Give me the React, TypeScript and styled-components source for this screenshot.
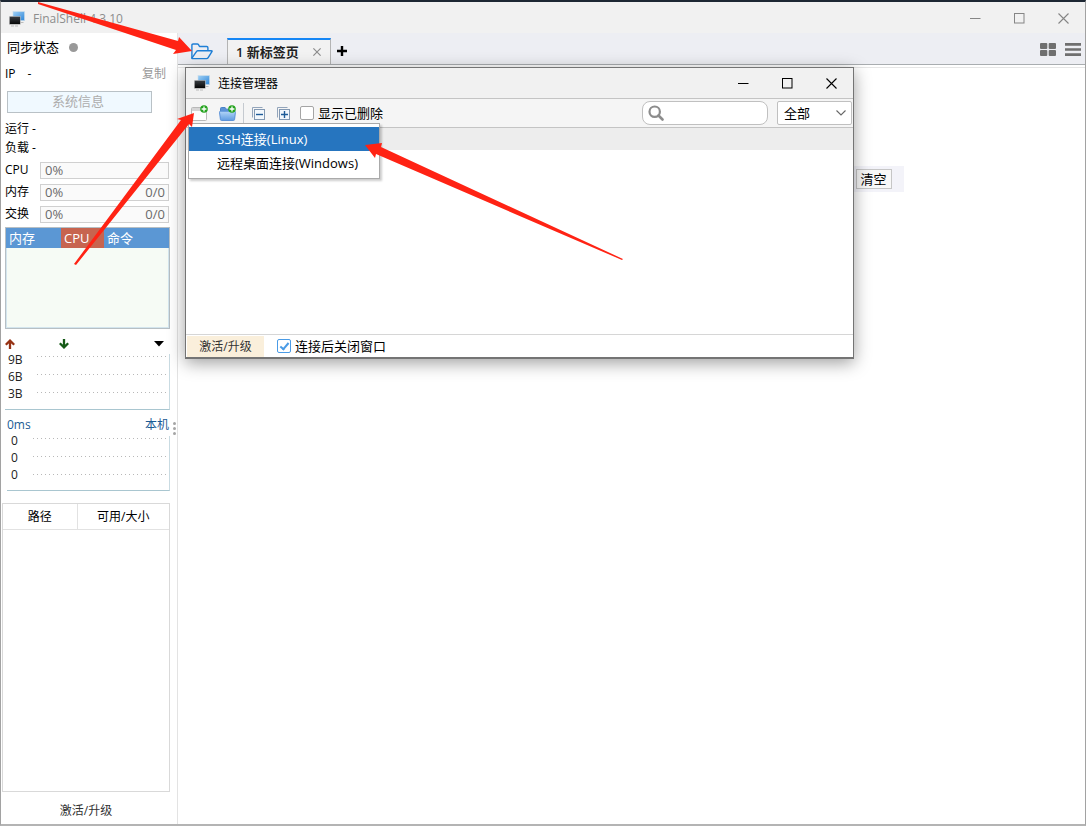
import React from 'react';
import styled, { createGlobalStyle } from 'styled-components';

const GlobalStyle = createGlobalStyle`
  *, *::before, *::after { box-sizing: border-box; }
  body {
    margin: 0;
    background: #fff;
    color: #000;
    font: 13px/18px "Open Sans", "Noto Sans CJK SC", sans-serif;
  }
  button, input, select { font: inherit; color: inherit; margin: 0; }
  button { padding: 0; border: 0; background: none; }
  svg { display: block; flex: none; }
`;

/* ---------- window ---------- */

const Window = styled.div`
  position: relative;
  display: flex;
  flex-direction: column;
  min-height: 100vh;
  overflow: hidden;
  border: 1px solid #a2a2a2;
  border-top: 2px solid #1d2733;
  border-bottom: 2px solid #b4b4b4;
`;

const TitleBar = styled.header`
  display: flex;
  align-items: center;
  height: 31px;
  padding: 2px 0 0 8px;
  background: #f1f1f1;
`;

const AppTitle = styled.h1`
  flex: 1;
  margin: 0 0 0 8px;
  font-size: 12px;
  font-weight: 400;
  color: #8d8d8d;
`;

const WindowButton = styled.button<{ $color: string }>`
  display: grid;
  place-items: center;
  width: 44px;
  height: 28px;
  color: ${(p) => p.$color};
`;

const Body = styled.div`
  flex: 1;
  display: flex;
`;

/* ---------- sidebar ---------- */

const Sidebar = styled.aside`
  position: relative;
  display: flex;
  flex-direction: column;
  flex: none;
  width: 177px;
  border-right: 1px solid #e3e3e3;
`;

const SyncRow = styled.div`
  display: flex;
  align-items: center;
  gap: 10px;
  height: 28px;
  padding-left: 6px;
`;

const SyncDot = styled.i`
  width: 9px;
  height: 9px;
  border-radius: 50%;
  background: #999;
`;

const IpRow = styled.div`
  display: flex;
  align-items: center;
  height: 26px;
  padding: 0 11px 0 4px;
  font-size: 12px;
  gap: 12px;
`;

const CopyButton = styled.button`
  margin-left: auto;
  color: #999;
`;

const InfoButton = styled.button`
  width: 145px;
  height: 22px;
  margin: 4px 0 6px 6px;
  padding: 0 3px 2px 0;
  border: 1px solid #b9c1c6;
  background: #f0f9ff;
  color: #adadad;
`;

const StatLine = styled.div`
  height: 19px;
  padding-left: 4px;
  font-size: 12px;
  line-height: 19px;
`;

const Meters = styled.div`
  padding-top: 2px;
`;

const MeterRow = styled.div`
  display: flex;
  align-items: center;
  height: 22px;
  padding: 0 8px 0 4px;
  font-size: 12px;
`;

const MeterLabel = styled.span`
  width: 35px;
`;

const Meter = styled.div`
  flex: 1;
  display: flex;
  justify-content: space-between;
  align-items: center;
  height: 17px;
  padding: 0 3px 0 4px;
  border: 1px solid #d0d0d0;
  background: #fafafa;
  color: #6a6a6a;
  font-size: 13px;
`;

const ProcessBox = styled.div`
  height: 102px;
  margin: 2px 7px 4px 4px;
  border: 1px solid #b7bfc4;
  background: #f6fbf5;
  box-shadow: inset 0 0 0 1px #d3e5ee;
`;

const ProcessTable = styled.table`
  width: 100%;
  border-collapse: collapse;
  table-layout: fixed;
`;

const ProcessHead = styled.th<{ $width?: number; $active?: boolean }>`
  width: ${(p) => (p.$width ? `${p.$width}px` : 'auto')};
  height: 20px;
  padding: 0 3px;
  background: ${(p) => (p.$active ? '#c7644f' : '#5b97d4')};
  color: #fff;
  font-size: 13px;
  font-weight: 400;
  line-height: 20px;
  text-align: left;
`;

const NetRow = styled.div`
  display: flex;
  align-items: center;
  height: 21px;
  padding: 0 13px 0 4px;
  gap: 44px;
`;

const MenuArrow = styled.button`
  margin-left: auto;
`;

const PingRow = styled.div`
  display: flex;
  justify-content: space-between;
  align-items: center;
  height: 26px;
  padding: 4px 8px 0 6px;
  font-size: 12px;
  color: #1b5b94;
`;

const Graph = styled.div<{ $indent: number }>`
  display: flex;
  height: ${(p) => (p.$indent ? 55 : 56)}px;
  margin: 0 7px 0 ${(p) => 4 + p.$indent}px;
  border-right: 1px solid #c9dbe2;
  border-bottom: 1px solid #a9c6d0;
`;

const GraphLabels = styled.div<{ $indent: number }>`
  width: ${(p) => 32 - p.$indent * 3}px;
  margin-top: ${(p) => (p.$indent ? -4 : -3)}px;
  padding-left: ${(p) => (p.$indent ? 4 : 3)}px;
  font-size: 12px;
  line-height: 17px;
  color: #222;
`;

const GraphLines = styled.div`
  flex: 1;
  padding: 2px 2px 0 0;
`;

const GraphLine = styled.div`
  height: 18px;
  background: repeating-linear-gradient(90deg, #b8b8b8 0 1px, transparent 1px 4px) top / 100% 1px no-repeat;
`;

const Grip = styled.div`
  position: absolute;
  top: 389px;
  right: 0;
  width: 4px;
  display: grid;
  gap: 2px;
`;

const GripDot = styled.i`
  width: 3px;
  height: 3px;
  border-radius: 50%;
  background: #a5a5a5;
`;

const DiskBox = styled.div`
  flex: 1;
  margin: 12px 7px 0 1px;
  border: 1px solid #d9d9d9;
`;

const DiskTable = styled.table`
  width: 100%;
  border-collapse: collapse;
  table-layout: fixed;
`;

const DiskHead = styled.th<{ $width?: number }>`
  width: ${(p) => (p.$width ? `${p.$width}px` : 'auto')};
  height: 25px;
  padding: 2px 0 0;
  border-bottom: 1px solid #e2e2e2;
  font-size: 12px;
  font-weight: 400;
  text-align: center;

  & + & { border-left: 1px solid #e2e2e2; }
`;

const SidebarUpgrade = styled.button`
  height: 32px;
  padding: 6px 6px 0 0;
  font-size: 12px;
  color: #333;
`;

/* ---------- main area ---------- */

const Main = styled.main`
  position: relative;
  flex: 1;
  min-width: 0;
`;

const TabBar = styled.nav`
  display: flex;
  align-items: center;
  height: 32px;
  padding: 5px 4px 0 13px;
  border-bottom: 1px solid #a9adb0;
  background: #edeef3;
`;

const Tab = styled.div`
  display: flex;
  align-items: center;
  align-self: flex-end;
  justify-content: space-between;
  width: 104px;
  height: 26px;
  margin: 0 6px 0 14px;
  padding: 0 9px 0 8px;
  border: 1px solid #b4b4b4;
  border-top: 2px solid #1586f5;
  border-bottom: 0;
  background: #f2f2f2;
  font-weight: 600;
`;

const TabTitle = styled.span`
  color: #222;
`;

const TabClose = styled.button`
  color: #8c8c8c;
`;

const ViewButtons = styled.div`
  display: flex;
  gap: 9px;
  margin: 0 0 4px auto;
`;

const Page = styled.div`
  margin-top: 2px;
  border-top: 1px solid #e6e6e6;
  padding-top: 98px;
`;

const RecentPanel = styled.div`
  display: flex;
  justify-content: flex-end;
  align-items: center;
  max-width: 544px;
  height: 26px;
  margin: 0 auto;
  padding-right: 12px;
  background: #f3f3f9;
`;

const ClearButton = styled.button`
  width: 36px;
  height: 20px;
  border: 1px solid #c6c6c6;
  background: #f8f8f8;
  line-height: 18px;
`;

/* ---------- connection manager ---------- */

const Dialog = styled.section`
  position: absolute;
  top: 34px;
  left: 7px;
  display: flex;
  flex-direction: column;
  width: 669px;
  height: 292px;
  border: 1px solid #747474;
  border-bottom-width: 2px;
  background: #fff;
  box-shadow: 0 4px 16px rgba(0, 0, 0, 0.38);
`;

const DialogTitleBar = styled.header`
  display: flex;
  align-items: center;
  height: 31px;
  padding-left: 8px;
  border-bottom: 1px solid #c4c4c4;
  background: #f1f1f1;
`;

const DialogTitle = styled.h2`
  flex: 1;
  margin: 0 0 0 8px;
  padding-top: 2px;
  font-size: 12px;
  font-weight: 400;
`;

const Toolbar = styled.div`
  display: flex;
  align-items: center;
  height: 29px;
  padding: 0 1px 0 5px;
  border-bottom: 1px solid #c4c4c4;
  background: #f5f5f5;
`;

const ToolButton = styled.button<{ $gap: number }>`
  margin-right: ${(p) => p.$gap}px;
`;

const Divider = styled.i`
  width: 1px;
  height: 20px;
  margin-right: 8px;
  background: #c5cad0;
`;

const CheckLabel = styled.label`
  display: flex;
  align-items: center;
  gap: 4px;
`;

const CheckBox = styled.input`
  appearance: none;
  display: grid;
  place-items: center;
  width: 14px;
  height: 14px;
  border: 1px solid #a5a5a5;
  border-radius: 2px;
  background: #fff;

  &:checked { border-color: #4a9be6; }
  &:checked::after {
    content: '';
    width: 5px;
    height: 9px;
    margin-top: -2px;
    border: solid #4a9be6;
    border-width: 0 2px 2px 0;
    transform: rotate(40deg);
  }
`;

const SearchField = styled.label`
  display: flex;
  align-items: center;
  width: 126px;
  height: 24px;
  margin: 0 9px 0 auto;
  padding-left: 5px;
  border: 1px solid #c0c0c0;
  border-radius: 8px;
  background: #fff;
`;

const SearchInput = styled.input`
  flex: 1;
  min-width: 0;
  border: 0;
  outline: 0;
  background: none;
`;

const SelectField = styled.div`
  display: grid;
  align-items: center;
  width: 75px;
  height: 24px;

  & > * { grid-area: 1 / 1; }
  & > svg { justify-self: end; margin-right: 6px; pointer-events: none; }
`;

const Select = styled.select`
  appearance: none;
  width: 100%;
  height: 24px;
  padding: 0 6px;
  border: 1px solid #c0c0c0;
  border-radius: 2px;
  background: #fff;
`;

const ListHeader = styled.div`
  height: 22px;
  background: #ededed;
`;

const List = styled.div`
  flex: 1;
`;

const DialogFooter = styled.footer`
  display: flex;
  align-items: center;
  gap: 13px;
  height: 23px;
  border-top: 1px solid #d6d6d6;
`;

const UpgradeButton = styled.button`
  width: 77px;
  height: 21px;
  margin-left: 1px;
  padding-top: 1px;
  background: #faefdb;
  color: #333;
  font-size: 12px;
`;

const Menu = styled.div`
  position: absolute;
  top: 55px;
  left: 2px;
  width: 192px;
  padding: 3px 0;
  border: 1px solid #aaa;
  background: #fff;
  box-shadow: 2px 2px 2px rgba(0, 0, 0, 0.2);
`;

const MenuItem = styled.button<{ $active?: boolean }>`
  display: block;
  width: 100%;
  height: 24px;
  padding-left: 28px;
  background: ${(p) => (p.$active ? '#2675bf' : '#fff')};
  color: ${(p) => (p.$active ? '#fff' : '#000')};
  text-align: left;
`;

const Arrows = styled.svg`
  position: absolute;
  top: -2px;
  left: -1px;
  pointer-events: none;
`;

/* ---------- icons ---------- */

const LogoIcon = () => (
  <svg width="16" height="16" viewBox="0 0 16 16">
    <defs>
      <linearGradient id="screen" x1="0" y1="0" x2="1" y2="1">
        <stop offset="0" stopColor="#9fd0f5" />
        <stop offset="1" stopColor="#2e86d8" />
      </linearGradient>
      <linearGradient id="term" x1="0" y1="0" x2="0" y2="1">
        <stop offset="0" stopColor="#3a3f44" />
        <stop offset="1" stopColor="#050505" />
      </linearGradient>
    </defs>
    <rect x="4" y=".6" width="11.5" height="9" fill="url(#screen)" stroke="#c8dcea" strokeWidth=".6" />
    <path d="M11.5 11.5h3" stroke="#bbb" />
    <rect x=".3" y="5.3" width="11" height="8" fill="url(#term)" stroke="#d0d0d0" strokeWidth=".5" />
    <path d="M2 15h8" stroke="#bbb" strokeDasharray="3 1" />
  </svg>
);

const MinimizeIcon = () => (
  <svg width="11" height="11" viewBox="0 0 11 11"><path d="M0 5.5h10.5" stroke="currentColor" /></svg>
);
const MaximizeIcon = () => (
  <svg width="11" height="11" viewBox="0 0 11 11"><rect x=".5" y=".5" width="9.5" height="9.5" fill="none" stroke="currentColor" /></svg>
);
const CloseIcon = ({ size = 11 }: { size?: number }) => (
  <svg width={size} height={size} viewBox="0 0 11 11"><path d="M.5.5l10 10M10.5.5l-10 10" stroke="currentColor" strokeWidth={size < 11 ? 1.6 : 1.1} /></svg>
);

const WindowControls = ({ color }: { color: string }) => (
  <>
    <WindowButton $color={color} aria-label="最小化"><MinimizeIcon /></WindowButton>
    <WindowButton $color={color} aria-label="最大化"><MaximizeIcon /></WindowButton>
    <WindowButton $color={color} aria-label="关闭"><CloseIcon /></WindowButton>
  </>
);

const OpenFolderIcon = () => (
  <svg width="22" height="17" viewBox="0 0 22 17" fill="none" stroke="#1f7fd6" strokeWidth="1.4" strokeLinejoin="round">
    <path d="M.9 15.2V2.2Q.9 1 2.1 1h4.2q.8 0 1.2.7l1 1.8h7.2q1.2 0 1.2 1.2v3" />
    <path d="M.9 15.2L5.6 8.4q.5-.7 1.3-.7H20.3q1.2 0 .6 1l-3.7 5.9q-.6 1-1.6 1H1.6q-.9 0-.7-.6z" />
  </svg>
);

const PlusIcon = () => (
  <svg width="10" height="10" viewBox="0 0 10 10"><path d="M5 0v10M0 5h10" stroke="#000" strokeWidth="2.4" /></svg>
);

const GridIcon = () => (
  <svg width="16" height="13" viewBox="0 0 16 13" fill="#6f6f6f">
    <rect width="7.3" height="6" rx="1" /><rect x="8.7" width="7.3" height="6" rx="1" />
    <rect y="7" width="7.3" height="6" rx="1" /><rect x="8.7" y="7" width="7.3" height="6" rx="1" />
  </svg>
);

const ListIcon = () => (
  <svg width="16" height="13" viewBox="0 0 16 13"><path d="M0 1.4h16M0 6.5h16M0 11.6h16" stroke="#6f6f6f" strokeWidth="2.6" /></svg>
);

const AddBadge = () => (
  <>
    <circle cx="13" cy="4" r="3.8" fill="#25a31f" />
    <path d="M13 1.6v4.8M10.6 4h4.8" stroke="#fff" strokeWidth="1.3" />
  </>
);

const NewConnectionIcon = () => (
  <svg width="17" height="17" viewBox="0 0 17 17">
    <rect x=".5" y="2.5" width="15" height="13" rx="1" fill="#fdfdfd" stroke="#b9b9b9" />
    <path d="M1 4.5h14" stroke="#d6d6d6" strokeWidth="3" />
    <AddBadge />
  </svg>
);

const NewFolderIcon = () => (
  <svg width="17" height="17" viewBox="0 0 17 17">
    <defs>
      <linearGradient id="folder" x1="0" y1="0" x2="0" y2="1">
        <stop offset="0" stopColor="#b4d6f8" />
        <stop offset="1" stopColor="#5f9be0" />
      </linearGradient>
    </defs>
    <path d="M1.5 13V3.5q0-1 1-1h3.6l1.2 1.7H15V13z" fill="#5a92d6" stroke="#4a82c8" />
    <path d="M.5 7.2q0-1 1-1h14q1 0 .9 1l-.8 7.2q-.1 1.1-1.1 1.1h-12q-1 0-1.1-1.1z" fill="url(#folder)" stroke="#5b92d8" />
    <AddBadge />
  </svg>
);

const TreeIcon = ({ plus = false }: { plus?: boolean }) => (
  <svg width="13" height="13" viewBox="0 0 13 13">
    <path d="M.5 10.5V.5h10" fill="none" stroke="#93a5bb" />
    <rect x="2.5" y="2.5" width="10" height="10" fill="#f2f7fc" stroke="#8399b3" />
    <path d={plus ? 'M4 7.5h7M7.5 4v7' : 'M4 7.5h7'} stroke="#1e5b98" strokeWidth="1.4" />
  </svg>
);

const SearchIcon = () => (
  <svg width="16" height="16" viewBox="0 0 16 16" fill="none" stroke="#8c8c8c">
    <circle cx="6.7" cy="6.7" r="5.2" strokeWidth="2.2" />
    <path d="M10.5 10.5l4 4" strokeWidth="2.6" strokeLinecap="round" />
  </svg>
);

const TrafficArrow = ({ down = false }: { down?: boolean }) => (
  <svg width="10" height="10" viewBox="0 0 10 10">
    <path
      d={down ? 'M5 0v8M.8 4.2L5 8.4l4.2-4.2' : 'M5 10V2M.8 5.8L5 1.6l4.2 4.2'}
      fill="none"
      stroke={down ? '#155a17' : '#963214'}
      strokeWidth="2.3"
    />
  </svg>
);

const meters = [
  { label: 'CPU', percent: '0%', total: '' },
  { label: '内存', percent: '0%', total: '0/0' },
  { label: '交换', percent: '0%', total: '0/0' },
];

const LineGraph = ({ labels, indent = 0 }: { labels: string[]; indent?: number }) => (
  <Graph $indent={indent}>
    <GraphLabels $indent={indent}>
      {labels.map((label, i) => <div key={i}>{label}</div>)}
    </GraphLabels>
    <GraphLines>
      {labels.map((_, i) => <GraphLine key={i} />)}
    </GraphLines>
  </Graph>
);

const ConnectionManager = () => (
  <Dialog role="dialog" aria-labelledby="manager-title">
    <DialogTitleBar>
      <LogoIcon />
      <DialogTitle id="manager-title">连接管理器</DialogTitle>
      <WindowControls color="#000" />
    </DialogTitleBar>
    <Toolbar>
      <ToolButton $gap={11} aria-label="新建连接"><NewConnectionIcon /></ToolButton>
      <ToolButton $gap={7} aria-label="新建文件夹"><NewFolderIcon /></ToolButton>
      <Divider />
      <ToolButton $gap={12} aria-label="全部折叠"><TreeIcon /></ToolButton>
      <ToolButton $gap={10} aria-label="全部展开"><TreeIcon plus /></ToolButton>
      <CheckLabel><CheckBox type="checkbox" />显示已删除</CheckLabel>
      <SearchField>
        <SearchIcon />
        <SearchInput type="text" aria-label="搜索" />
      </SearchField>
      <SelectField>
        <Select aria-label="类型"><option>全部</option></Select>
        <svg width="10" height="6" viewBox="0 0 10 6"><path d="M.5.5L5 5 9.5.5" fill="none" stroke="#666" strokeWidth="1.1" /></svg>
      </SelectField>
    </Toolbar>
    <ListHeader />
    <List />
    <DialogFooter>
      <UpgradeButton>激活/升级</UpgradeButton>
      <CheckLabel><CheckBox type="checkbox" defaultChecked />连接后关闭窗口</CheckLabel>
    </DialogFooter>
    <Menu role="menu">
      <MenuItem role="menuitem" $active>SSH连接(Linux)</MenuItem>
      <MenuItem role="menuitem">远程桌面连接(Windows)</MenuItem>
    </Menu>
  </Dialog>
);

export default function App() {
  return (
    <>
      <GlobalStyle />
      <Window>
        <TitleBar>
          <LogoIcon />
          <AppTitle>FinalShell 4.3.10</AppTitle>
          <WindowControls color="#858585" />
        </TitleBar>
        <Body>
          <Sidebar>
            <SyncRow>同步状态<SyncDot /></SyncRow>
            <IpRow>
              <span>IP</span>
              <span>-</span>
              <CopyButton>复制</CopyButton>
            </IpRow>
            <InfoButton>系统信息</InfoButton>
            <StatLine>运行 -</StatLine>
            <StatLine>负载 -</StatLine>
            <Meters>
              {meters.map((m) => (
                <MeterRow key={m.label}>
                  <MeterLabel>{m.label}</MeterLabel>
                  <Meter><span>{m.percent}</span><span>{m.total}</span></Meter>
                </MeterRow>
              ))}
            </Meters>
            <ProcessBox>
              <ProcessTable>
                <thead>
                  <tr>
                    <ProcessHead $width={55}>内存</ProcessHead>
                    <ProcessHead $width={43} $active>CPU</ProcessHead>
                    <ProcessHead>命令</ProcessHead>
                  </tr>
                </thead>
              </ProcessTable>
            </ProcessBox>
            <NetRow>
              <TrafficArrow />
              <TrafficArrow down />
              <MenuArrow aria-label="网卡">
                <svg width="10" height="6" viewBox="0 0 10 6"><path d="M0 0h10L5 5.5z" /></svg>
              </MenuArrow>
            </NetRow>
            <LineGraph labels={['9B', '6B', '3B']} />
            <PingRow><span>0ms</span><span>本机</span></PingRow>
            <LineGraph labels={['0', '0', '0']} indent={2} />
            <DiskBox>
              <DiskTable>
                <thead>
                  <tr>
                    <DiskHead $width={74}>路径</DiskHead>
                    <DiskHead>可用/大小</DiskHead>
                  </tr>
                </thead>
              </DiskTable>
            </DiskBox>
            <SidebarUpgrade>激活/升级</SidebarUpgrade>
            <Grip><GripDot /><GripDot /><GripDot /></Grip>
          </Sidebar>
          <Main>
            <TabBar>
              <button aria-label="打开连接管理器"><OpenFolderIcon /></button>
              <Tab>
                <TabTitle>1 新标签页</TabTitle>
                <TabClose aria-label="关闭标签"><CloseIcon size={8} /></TabClose>
              </Tab>
              <button aria-label="新建标签"><PlusIcon /></button>
              <ViewButtons>
                <button aria-label="网格视图"><GridIcon /></button>
                <button aria-label="列表视图"><ListIcon /></button>
              </ViewButtons>
            </TabBar>
            <Page>
              <RecentPanel><ClearButton>清空</ClearButton></RecentPanel>
            </Page>
            <ConnectionManager />
          </Main>
        </Body>
        <Arrows width="640" height="280" viewBox="0 0 640 280" fill="#ff2314" aria-hidden="true">
          <polygon points="38,2 178,41 179,37 192,51 173,54 176,50 38,4" />
          <polygon points="74,264 181,120 177,119 194,113 192,127 189,124 76,265" />
          <polygon points="365,145 382,143 381,147 623,259 622,260 376,154 375,158" />
        </Arrows>
      </Window>
    </>
  );
}
